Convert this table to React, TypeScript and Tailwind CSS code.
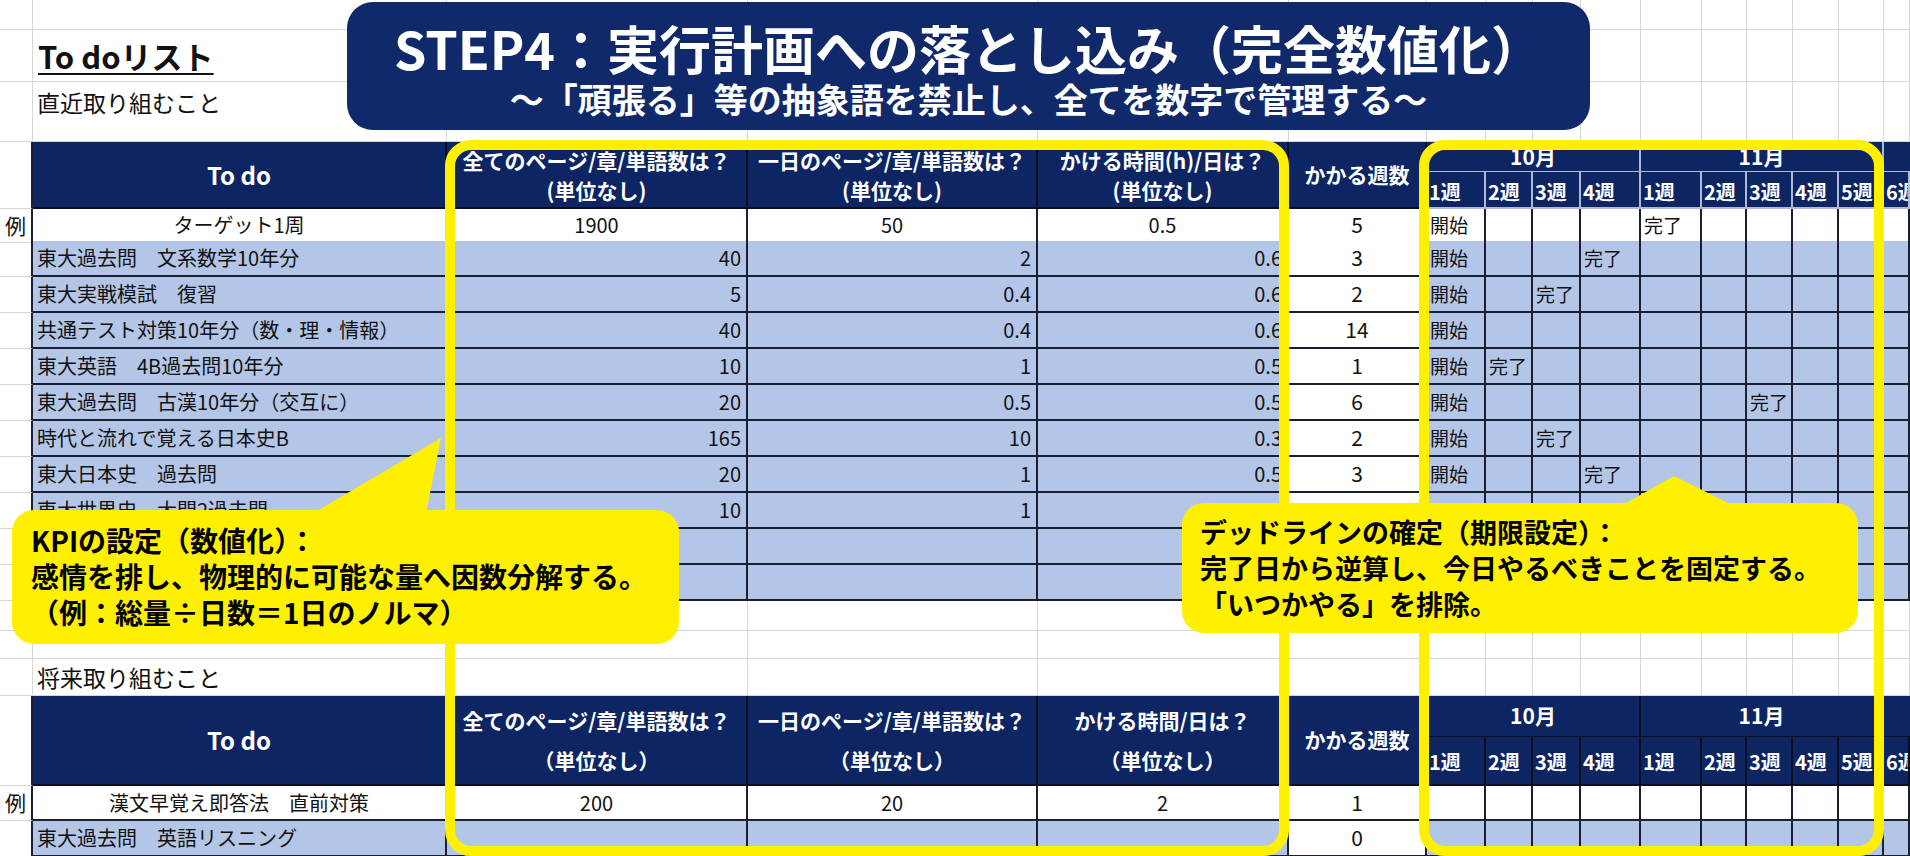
import React from "react";

// shared column template: gutter, To do, 3 question columns, weeks count, 10 week columns
const GRID =
  "grid grid-cols-[33px_414px_301px_290px_251px_138px_59px_47px_48px_60px_61px_45px_46px_46px_45px_26px]";

type Plan = {
  name: string;
  total?: string;
  daily?: string;
  hours?: string;
  weeks?: string;
  marks?: Record<number, string>;
};

const WEEKS = ["1週", "2週", "3週", "4週", "1週", "2週", "3週", "4週", "5週", "6週"];

const upperExample: Plan = {
  name: "ターゲット1周",
  total: "1900",
  daily: "50",
  hours: "0.5",
  weeks: "5",
  marks: { 0: "開始", 4: "完了" },
};

const upperRows: Plan[] = [
  { name: "東大過去問　文系数学10年分", total: "40", daily: "2", hours: "0.6", weeks: "3", marks: { 0: "開始", 3: "完了" } },
  { name: "東大実戦模試　復習", total: "5", daily: "0.4", hours: "0.6", weeks: "2", marks: { 0: "開始", 2: "完了" } },
  { name: "共通テスト対策10年分（数・理・情報）", total: "40", daily: "0.4", hours: "0.6", weeks: "14", marks: { 0: "開始" } },
  { name: "東大英語　4B過去問10年分", total: "10", daily: "1", hours: "0.5", weeks: "1", marks: { 0: "開始", 1: "完了" } },
  { name: "東大過去問　古漢10年分（交互に）", total: "20", daily: "0.5", hours: "0.5", weeks: "6", marks: { 0: "開始", 6: "完了" } },
  { name: "時代と流れで覚える日本史B", total: "165", daily: "10", hours: "0.3", weeks: "2", marks: { 0: "開始", 2: "完了" } },
  { name: "東大日本史　過去問", total: "20", daily: "1", hours: "0.5", weeks: "3", marks: { 0: "開始", 3: "完了" } },
  { name: "東大世界史　大問2過去問", total: "10", daily: "1" },
  { name: "" },
  { name: "" },
];

const lowerExample: Plan = { name: "漢文早覚え即答法　直前対策", total: "200", daily: "20", hours: "2", weeks: "1" };
const lowerRow: Plan = { name: "東大過去問　英語リスニング", weeks: "0" };

function SheetRow({ h, label, labelClass = "" }: { h: string; label?: string; labelClass?: string }) {
  return (
    <div className={`${GRID} ${h}`}>
      {Array.from({ length: 16 }).map((_, i) => (
        <div key={i} className="flex items-center whitespace-nowrap border-r border-b border-[#d6d6d6]">
          {i === 1 && label ? <span className={labelClass}>{label}</span> : null}
        </div>
      ))}
    </div>
  );
}

function TableHeader({
  rows,
  hoursLabel,
  unit,
  lower,
}: {
  rows: string;
  hoursLabel: string;
  unit: string;
  lower?: boolean;
}) {
  const head = "bg-[#0d2563] text-white font-bold border-r-2 border-b-2 border-[#0a0f1f]";
  const question = `${head} row-span-2 flex flex-col items-center justify-center text-[21px] whitespace-nowrap ${
    lower ? "leading-[40px]" : "leading-[30px]"
  }`;
  const sep = lower ? "border-[#0a0f1f]" : "border-[#aeb9d6]";

  return (
    <div className={`${GRID} ${rows}`}>
      <div className="row-span-2 border-r-2 border-r-[#1a2030] border-b border-b-[#d6d6d6]" />
      <div className={`${head} row-span-2 flex items-center justify-center text-[24px]`}>To do</div>
      <div className={question}>
        <span>全てのページ/章/単語数は？</span>
        <span>{unit}</span>
      </div>
      <div className={question}>
        <span>一日のページ/章/単語数は？</span>
        <span>{unit}</span>
      </div>
      <div className={question}>
        <span>{hoursLabel}</span>
        <span>{unit}</span>
      </div>
      <div className={`${head} row-span-2 flex items-center justify-center text-[21px]`}>かかる週数</div>
      <div className={`col-span-4 bg-[#0d2563] text-white font-bold text-[21px] flex items-center justify-center border-r-2 border-b ${sep}`}>
        10月
      </div>
      <div className={`col-span-5 bg-[#0d2563] text-white font-bold text-[21px] flex items-center justify-center border-r-2 border-b ${sep}`}>
        11月
      </div>
      <div className={`bg-[#0d2563] border-b ${sep}`} />
      {WEEKS.map((w, i) => (
        <div
          key={i}
          className={`bg-[#0d2563] text-white font-bold text-[20px] flex items-center pl-[2px] whitespace-nowrap overflow-hidden border-r-2 border-b-2 ${sep} ${
            lower ? "pt-[2px]" : "pt-[4px]"
          }`}
        >
          {w}
        </div>
      ))}
    </div>
  );
}

function PlanRow({ plan, example, h }: { plan: Plan; example?: boolean; h: string }) {
  const fill = example ? "bg-white" : "bg-[#b4c6e7]";
  const line = "border-r-2 border-b-2 border-[#1a2030]";
  const num = example ? "justify-center" : "justify-end pr-[5px]";
  return (
    <div className={`${GRID} ${h}`}>
      <div className="flex items-center justify-center text-[21px] border-r-2 border-r-[#1a2030] border-b border-b-[#d6d6d6]">
        {example ? "例" : ""}
      </div>
      <div
        className={`${fill} ${line} flex items-center text-[20px] whitespace-nowrap overflow-hidden ${
          example ? "justify-center" : "pl-[4px]"
        }`}
      >
        {plan.name}
      </div>
      {[plan.total, plan.daily, plan.hours].map((v, i) => (
        <div key={i} className={`${fill} ${line} flex items-center text-[20px] ${num}`}>
          {v}
        </div>
      ))}
      <div className={`bg-white ${line} flex items-center justify-center text-[21px]`}>{plan.weeks}</div>
      {WEEKS.map((_, i) => (
        <div key={i} className={`${fill} ${line} flex items-center pl-[3px] text-[19px] whitespace-nowrap overflow-hidden`}>
          {plan.marks?.[i] ?? ""}
        </div>
      ))}
    </div>
  );
}

export default function App() {
  return (
    <div className="relative w-[1910px] h-[856px] overflow-hidden bg-white text-[#111] font-['Noto_Sans_CJK_JP','Noto_Sans',sans-serif]">
      <SheetRow h="h-[30px]" />
      <SheetRow
        h="h-[52px]"
        label="To doリスト"
        labelClass="pl-[5px] text-[31px] leading-[40px] font-bold underline decoration-2 underline-offset-[4px]"
      />
      <SheetRow h="h-[60px]" label="直近取り組むこと" labelClass="self-start mt-[3px] pl-[4px] text-[23px]" />

      <TableHeader rows="grid-rows-[30px_37px]" hoursLabel="かける時間(h)/日は？" unit="(単位なし)" />
      <PlanRow plan={upperExample} example h="h-[32px]" />
      {upperRows.map((p, i) => (
        <PlanRow key={i} plan={p} h="h-[36px]" />
      ))}

      <SheetRow h="h-[30px]" />
      <SheetRow h="h-[28px]" />
      <SheetRow h="h-[37px]" label="将来取り組むこと" labelClass="pl-[4px] text-[23px]" />

      <TableHeader rows="grid-rows-[41px_49px]" hoursLabel="かける時間/日は？" unit="（単位なし）" lower />
      <PlanRow plan={lowerExample} example h="h-[35px]" />
      <PlanRow plan={lowerRow} h="h-[36px]" />

      {/* title banner */}
      <div className="absolute left-[347px] top-[2px] w-[1243px] h-[128px] rounded-[26px] bg-[#10296a] flex flex-col items-center text-white font-bold">
        <div className="mt-[19px] text-[52px] leading-[54px] whitespace-nowrap">STEP4：実行計画への落とし込み（完全数値化）</div>
        <div className="mt-[4px] text-[34px] leading-[40px] whitespace-nowrap">～「頑張る」等の抽象語を禁止し、全てを数字で管理する～</div>
      </div>

      {/* highlight frames */}
      <div className="absolute left-[445px] top-[140px] w-[844px] h-[716px] rounded-[26px] border-[10px] border-[#fff000]" />
      <div className="absolute left-[1419px] top-[140px] w-[465px] h-[716px] rounded-[26px] border-[10px] border-[#fff000]" />

      {/* callout pointers */}
      <svg className="absolute left-0 top-0 pointer-events-none" width="1910" height="856">
        <polygon points="441,438 305,518 425,518" fill="#fff000" />
        <polygon points="1674,476 1610,512 1746,512" fill="#fff000" />
      </svg>

      {/* callouts */}
      <div className="absolute left-[12px] top-[510px] w-[667px] h-[134px] rounded-[22px] bg-[#fff000] pl-[19px] pt-[12px] text-[28px] leading-[36px] font-bold text-black whitespace-nowrap">
        <div>KPIの設定（数値化）：</div>
        <div>感情を排し、物理的に可能な量へ因数分解する。</div>
        <div>（例：総量÷日数＝1日のノルマ）</div>
      </div>
      <div className="absolute left-[1182px] top-[503px] w-[676px] h-[130px] rounded-[22px] bg-[#fff000] pl-[18px] pt-[11px] text-[27px] leading-[36px] font-bold text-black whitespace-nowrap">
        <div>デッドラインの確定（期限設定）：</div>
        <div>完了日から逆算し、今日やるべきことを固定する。</div>
        <div>「いつかやる」を排除。</div>
      </div>
    </div>
  );
}
